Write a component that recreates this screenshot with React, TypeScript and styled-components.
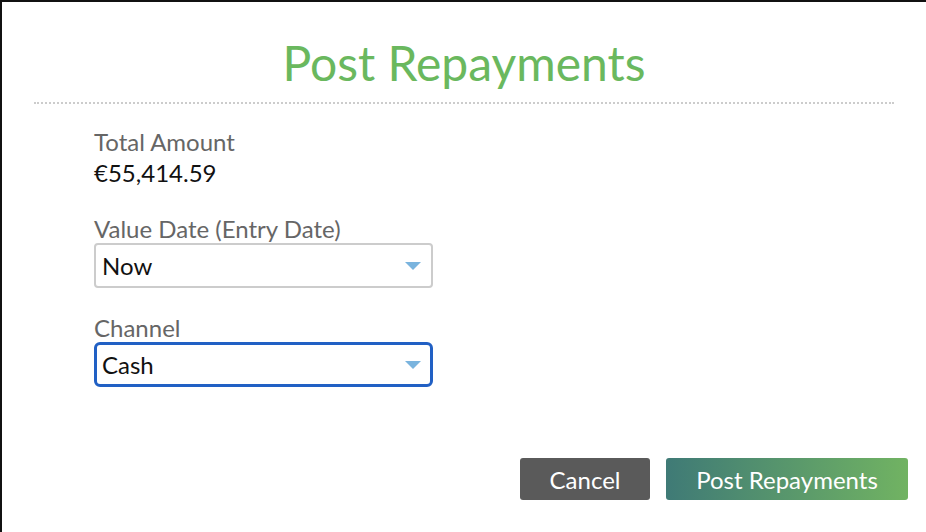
import React from "react";
import styled, { createGlobalStyle } from "styled-components";

const GlobalStyle = createGlobalStyle`
  html, body { margin: 0; padding: 0; background: #ffffff; }
  body { font-family: Lato, "Open Sans", Arial, sans-serif; }
  * { box-sizing: border-box; }
`;

const Frame = styled.div`
  width: 926px;
  height: 532px;
  border-top: 2px solid #111111;
  border-left: 2px solid #111111;
  background: #ffffff;
  display: flex;
  flex-direction: column;
`;

const Header = styled.div`
  margin: 0 32px;
  padding-top: 33px;
  height: 102px;
  border-bottom: 2px dotted #cccccc;
  display: flex;
  justify-content: center;
`;

const Title = styled.h1`
  margin: 0;
  font-family: Lato, sans-serif;
  font-weight: 400;
  font-size: 48px;
  line-height: 56px;
  color: #6ab85e;
`;

const Body = styled.div`
  padding: 24px 0 0 92px;
  display: flex;
  flex-direction: column;
  gap: 26px;
`;

const Field = styled.div`
  display: flex;
  flex-direction: column;
`;

const Label = styled.div`
  font-size: 24px;
  line-height: 28px;
  color: #666666;
`;

const Value = styled.div`
  font-size: 24px;
  line-height: 33px;
  color: #111111;
`;

const SelectBox = styled.div<{ $focused?: boolean }>`
  width: 339px;
  height: 45px;
  border: ${(p) => (p.$focused ? "3px solid #2160c4" : "2px solid #cccccc")};
  border-radius: ${(p) => (p.$focused ? "6px" : "4px")};
  padding: ${(p) => (p.$focused ? "0 9px 0 5px" : "0 10px 0 6px")};
  display: flex;
  align-items: center;
  justify-content: space-between;
  font-size: 24px;
  line-height: 28px;
  color: #111111;
`;

const Arrow = styled.span`
  width: 0;
  height: 0;
  border-left: 8.5px solid transparent;
  border-right: 8.5px solid transparent;
  border-top: 8.5px solid #7ab4de;
`;

const Footer = styled.div`
  margin-top: auto;
  padding: 0 18px 32px 0;
  display: flex;
  justify-content: flex-end;
  gap: 16px;
`;

const Button = styled.button<{ $primary?: boolean }>`
  height: 42px;
  width: ${(p) => (p.$primary ? "242px" : "130px")};
  padding: 0;
  border: none;
  border-radius: 3px;
  font-family: Lato, sans-serif;
  font-size: 24px;
  color: #ffffff;
  background: ${(p) =>
    p.$primary ? "linear-gradient(90deg, #3f7a76 0%, #71b362 100%)" : "#5a5a5a"};
  cursor: pointer;
`;

export default function App() {
  return (
    <>
      <GlobalStyle />
      <Frame>
        <Header>
          <Title>Post Repayments</Title>
        </Header>
        <Body>
          <Field>
            <Label>Total Amount</Label>
            <Value>€55,414.59</Value>
          </Field>
          <Field>
            <Label>Value Date (Entry Date)</Label>
            <SelectBox>
              <span>Now</span>
              <Arrow />
            </SelectBox>
          </Field>
          <Field>
            <Label>Channel</Label>
            <SelectBox $focused>
              <span>Cash</span>
              <Arrow />
            </SelectBox>
          </Field>
        </Body>
        <Footer>
          <Button>Cancel</Button>
          <Button $primary>Post Repayments</Button>
        </Footer>
      </Frame>
    </>
  );
}
